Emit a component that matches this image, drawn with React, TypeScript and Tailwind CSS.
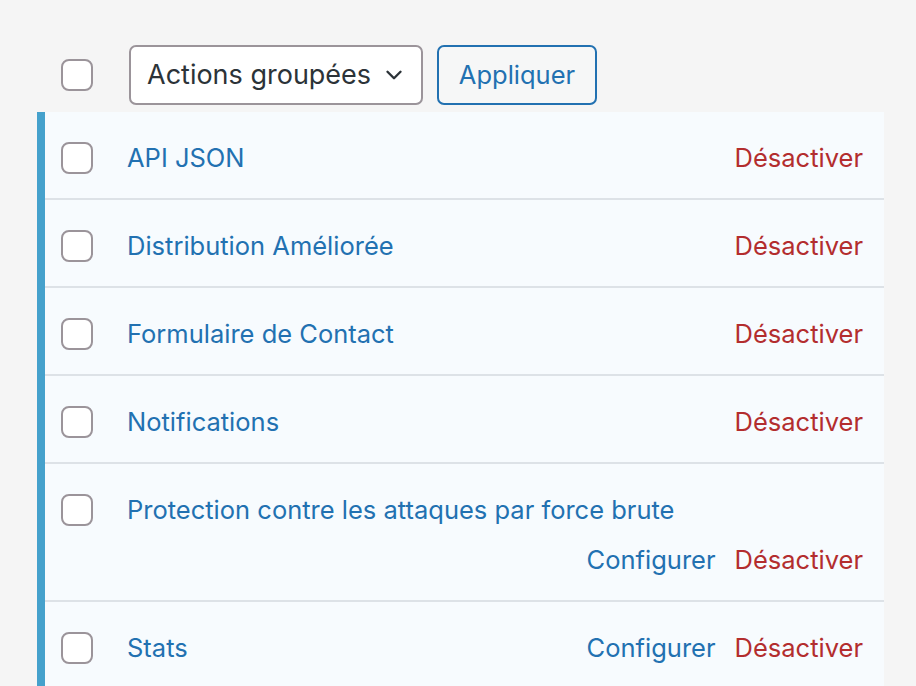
import { ChevronDown } from "lucide-react";

type Plugin = {
  name: string;
  configure?: boolean;
};

const plugins: Plugin[] = [
  { name: "API JSON" },
  { name: "Distribution Améliorée" },
  { name: "Formulaire de Contact" },
  { name: "Notifications" },
  { name: "Protection contre les attaques par force brute", configure: true },
  { name: "Stats", configure: true },
];

function Checkbox() {
  return (
    <span className="block h-[32px] w-[32px] shrink-0 rounded-[8px] border-2 border-[#9b949a] bg-white" />
  );
}

function PluginRow({ plugin }: { plugin: Plugin }) {
  return (
    <div className="flex items-start border-b-2 border-[#dde2e7] pl-[16px] pr-[21px] pt-[28px] pb-[22px] last:border-b-0">
      <div className="flex h-[36px] items-center">
        <Checkbox />
      </div>
      <div className="ml-[34px] flex flex-1 flex-wrap items-center gap-x-[20px] gap-y-[14px]">
        <a className="flex h-[36px] items-center text-[#2271b1]">{plugin.name}</a>
        <div className="ml-auto flex h-[36px] items-center gap-[19px]">
          {plugin.configure && <a className="text-[#2271b1]">Configurer</a>}
          <a className="text-[#b32d2e]">Désactiver</a>
        </div>
      </div>
    </div>
  );
}

export default function App() {
  return (
    <div
      className="min-h-[686px] bg-[#f5f5f5] pl-[37px] pr-[32px] pt-[45px] text-[25.5px]"
      style={{ fontFamily: "Inter, 'Noto Sans', sans-serif" }}
    >
      {/* bulk actions bar */}
      <div className="flex items-center pb-[7px]">
        <div className="ml-[24px]">
          <Checkbox />
        </div>
        <button className="ml-[36px] flex h-[60px] w-[294px] items-center justify-between rounded-[7px] border-2 border-[#9b949a] bg-white pl-[16px] pr-[14px] text-[27px] text-[#2c3338]">
          Actions groupées
          <ChevronDown className="h-[26px] w-[26px]" strokeWidth={2.2} />
        </button>
        <button className="ml-[14px] flex h-[60px] w-[160px] items-center justify-center rounded-[7px] border-2 border-[#2271b1] bg-[#f6f7f7] text-[25.5px] text-[#2271b1]">
          Appliquer
        </button>
      </div>

      {/* active plugins */}
      <div className="border-l-[8px] border-[#45a1cc] bg-[#f7fbfe]">
        {plugins.map((p) => (
          <PluginRow key={p.name} plugin={p} />
        ))}
      </div>
    </div>
  );
}
